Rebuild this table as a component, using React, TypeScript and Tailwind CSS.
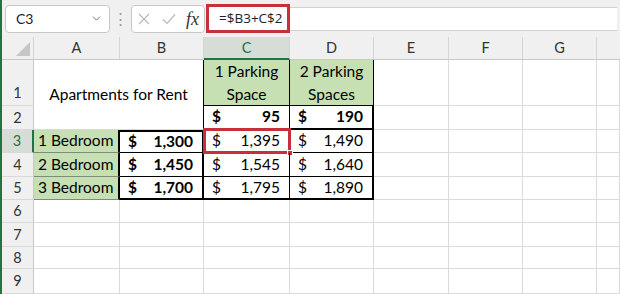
import React from 'react';
import { ChevronDown } from 'lucide-react';

const colHdr =
  'flex items-center justify-center bg-[#f0f0f0] border-r border-b border-r-[#d4d4d4] border-b-[#c8c8c8] text-[14.5px] text-[#333]';
const rowHdr =
  'flex items-center justify-center bg-[#f0f0f0] border-r border-b border-r-[#c8c8c8] border-b-[#d9d9d9] text-[14.5px] text-[#333]';
const grid = 'border-r border-b border-[#dadada]';
const green = 'bg-[#c6e0b4]';

const Money: React.FC<{ v: string; bold?: boolean }> = ({ v, bold }) => (
  <div className={`flex h-full items-center justify-between pl-[8px] pr-[9px] ${bold ? 'font-bold' : ''}`}>
    <span>$</span>
    <span>{v}</span>
  </div>
);

const App: React.FC = () => {
  return (
    <div className="w-[620px] h-[294px] overflow-hidden bg-[#f0f0f0] border-l-2 border-[#217346] font-['Lato',sans-serif] text-black">
      {/* formula bar */}
      <div className="flex h-[37px] items-center pl-[3px]">
        <div className="flex h-[28px] w-[105px] items-center justify-between rounded-[4px] border border-[#c8c8c8] bg-white pl-[10px] pr-[6px] text-[14px] text-[#222]">
          <span>C3</span>
          <ChevronDown size={13} strokeWidth={1.5} className="text-[#555]" />
        </div>
        <div className="flex w-[21px] justify-center text-[15px] leading-none text-[#999]">⋮</div>
        <div className="flex h-[28px] w-[74px] items-center rounded-[4px] border border-[#c8c8c8] bg-white pl-[6px]">
          <svg width="12" height="12" viewBox="0 0 12 12" className="mr-[12px]">
            <path d="M1 1 L11 11 M11 1 L1 11" stroke="#b9b9b9" strokeWidth="1.2" fill="none" />
          </svg>
          <svg width="14" height="12" viewBox="0 0 14 12" className="mr-[10px]">
            <path d="M1 6.5 L5 10.5 L13 1.5" stroke="#b9b9b9" strokeWidth="1.2" fill="none" />
          </svg>
          <span className="font-['Liberation_Serif',serif] italic text-[18px] leading-none text-[#333]">fx</span>
        </div>
        <div className="ml-[1px] flex h-[24px] flex-1 items-center border-y border-[#d0d0d0] bg-white">
          <div className="flex h-[29px] w-[84px] items-center border-[3px] border-[#c5303a] bg-white pl-[10px] font-['Open_Sans',sans-serif] text-[13.5px] text-[#222]">
            =$B3+C$2
          </div>
        </div>
        <div className="w-[3px]" />
      </div>

      {/* sheet */}
      <div className="grid grid-cols-[32px_86px_84px_86px_84px_75px_74px_74px_1fr] grid-rows-[23px_46px_24px_23px_24px_23px_23px_24px_22px_25px] bg-white text-[15.5px]">
        {/* header row */}
        <div className={`${colHdr} items-end justify-end`}>
          <svg width="16" height="16" viewBox="0 0 16 16" className="mb-[2px] mr-[2px]">
            <path d="M15 1 L15 15 L1 15 Z" fill="#c6c6c6" />
          </svg>
        </div>
        <div className={colHdr}>A</div>
        <div className={colHdr}>B</div>
        <div className="flex items-center justify-center bg-[#d6dcd6] border-r border-r-[#d4d4d4] border-b-2 border-b-[#217346] text-[14.5px] text-[#217346]">
          C
        </div>
        <div className={colHdr}>D</div>
        <div className={colHdr}>E</div>
        <div className={colHdr}>F</div>
        <div className={colHdr}>G</div>
        <div className={`${colHdr} border-r-0`} />

        {/* row 1 */}
        <div className={`${rowHdr} items-end pb-[1px]`}>1</div>
        <div className="col-span-2 row-span-2 flex items-center justify-center border-r border-b border-r-black border-b-[#dadada]">
          Apartments for Rent
        </div>
        <div className={`${green} flex items-center justify-center border-r border-b border-black text-center leading-[23px]`}>
          1 Parking<br />Space
        </div>
        <div className={`${green} flex items-center justify-center border-r border-b border-black text-center leading-[23px]`}>
          2 Parking<br />Spaces
        </div>
        <div className={grid} />
        <div className={grid} />
        <div className={grid} />
        <div className={grid} />

        {/* row 2 */}
        <div className={rowHdr}>2</div>
        <div className="border-r border-r-black border-b-2 border-b-black">
          <Money v="95" bold />
        </div>
        <div className="border-r-2 border-b-2 border-black">
          <Money v="190" bold />
        </div>
        <div className={grid} />
        <div className={grid} />
        <div className={grid} />
        <div className={grid} />

        {/* rows 3-5 */}
        {[
          { n: '3', a: '1 Bedroom', b: '1,300', c: '1,395', d: '1,490' },
          { n: '4', a: '2 Bedroom', b: '1,450', c: '1,545', d: '1,640' },
          { n: '5', a: '3 Bedroom', b: '1,700', c: '1,795', d: '1,890' },
        ].map((r, i) => (
          <React.Fragment key={r.n}>
            {r.n === '3' ? (
              <div className="flex items-center justify-center bg-[#d6dcd6] border-r-2 border-r-[#217346] border-b border-b-[#d9d9d9] text-[14.5px] text-[#217346]">
                3
              </div>
            ) : (
              <div className={rowHdr}>{r.n}</div>
            )}
            <div className={`${green} flex items-center pl-[4px] border-r-2 border-r-black border-b border-b-[#7d8c74]`}>
              {r.a}
            </div>
            <div
              className={
                i === 0
                  ? 'border-t-2 border-r-2 border-b border-black'
                  : i === 2
                  ? 'border-r-2 border-b-2 border-black'
                  : 'border-r-2 border-b border-black'
              }
            >
              <Money v={r.b} bold />
            </div>
            <div className={`relative ${i === 2 ? 'border-r border-b-2 border-black' : 'border-r border-b border-black'}`}>
              <Money v={r.c} />
              {i === 0 && (
                <>
                  <div className="pointer-events-none absolute -left-[1px] -top-[2px] -right-[2px] -bottom-[2px] border-[3px] border-[#c5303a]" />
                  <div className="absolute -right-[4px] -bottom-[4px] h-[6px] w-[6px] border border-white bg-[#c5303a]" />
                </>
              )}
            </div>
            <div className={i === 2 ? 'border-r-2 border-b-2 border-black' : 'border-r-2 border-b border-black'}>
              <Money v={r.d} />
            </div>
            <div className={grid} />
            <div className={grid} />
            <div className={grid} />
            <div className={grid} />
          </React.Fragment>
        ))}

        {/* rows 6-9 */}
        {['6', '7', '8', '9'].map((n) => (
          <React.Fragment key={n}>
            <div className={rowHdr}>{n}</div>
            <div className={grid} />
            <div className={grid} />
            <div className={grid} />
            <div className={grid} />
            <div className={grid} />
            <div className={grid} />
            <div className={grid} />
            <div className={grid} />
          </React.Fragment>
        ))}
      </div>
    </div>
  );
};

export default App;
